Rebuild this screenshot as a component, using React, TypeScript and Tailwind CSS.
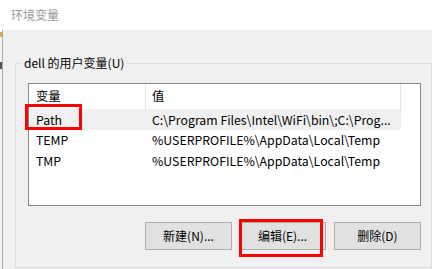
const font = { fontFamily: '"Noto Sans CJK SC", "Noto Sans", sans-serif' };

const rows = [
  { name: "Path", value: "C:\\Program Files\\Intel\\WiFi\\bin\\;C:\\Prog...", selected: true },
  { name: "TEMP", value: "%USERPROFILE%\\AppData\\Local\\Temp" },
  { name: "TMP", value: "%USERPROFILE%\\AppData\\Local\\Temp" },
];

function Btn({ label, className = "" }: { label: string; className?: string }) {
  return (
    <button className={`w-[87px] h-[28px] bg-[#e1e1e1] border border-[#adadad] text-[12px] text-black flex items-center justify-center ${className}`}>
      {label}
    </button>
  );
}

export default function App() {
  return (
    <div className="relative w-[432px] h-[269px] overflow-hidden flex bg-white text-black" style={font}>
      {/* edge of the window behind */}
      <div className="w-[2px] flex flex-col bg-[#f3f3f3]">
        <div className="h-[32px] bg-white" />
        <div className="h-[5px] bg-[#e8a33c]" />
        <div className="h-[25px]" />
        <div className="h-[7px] bg-[#555]" />
      </div>

      <div className="flex-1 flex flex-col">
        <div className="h-[30px] bg-white flex items-center pl-[9px] text-[12px] text-[#999]">
          环境变量
        </div>

        <div className="flex-1 bg-[#f0f0f0] border-l border-[#a9a9a9] pl-[12px] pt-[33px]">
          <div className="relative border border-[#dcdcdc] h-[205px] pl-[12px] pt-[19px] pr-[10px]">
            <span className="absolute -top-[10px] left-[6px] px-[2px] bg-[#f0f0f0] text-[12px] leading-[18px]">
              dell 的用户变量(U)
            </span>

            <div className="h-[123px] bg-white border border-[#828790] text-[12.3px]">
              <div className="flex h-[25px] items-center">
                <div className="w-[117px] h-full pl-[7px] flex items-center border-r border-[#e5e5e5]">变量</div>
                <div className="w-[255px] h-full pl-[6px] flex items-center border-r border-[#e5e5e5]">值</div>
              </div>
              {rows.map((r) => (
                <div key={r.name} className="flex h-[20.5px] items-center">
                  <div className={`flex h-full items-center w-[372px] pt-[1px] ${r.selected ? "bg-[#f0f0f0]" : ""}`}>
                    <div className="w-[117px] pl-[7px]">{r.name}</div>
                    <div className="w-[255px] pl-[6px] whitespace-nowrap overflow-hidden">{r.value}</div>
                  </div>
                </div>
              ))}
            </div>

            <div className="flex justify-end mt-[16px]">
              <Btn label="新建(N)..." />
              <Btn label="编辑(E)..." className="ml-[7px]" />
              <Btn label="删除(D)" className="ml-[8px]" />
            </div>
          </div>
        </div>
      </div>

      {/* red highlight boxes */}
      <div className="absolute left-[25px] top-[104px] w-[57px] h-[26px] border-[3px] border-[#f00]" />
      <div className="absolute left-[239px] top-[219px] w-[84px] h-[38px] border-[3px] border-[#f00]" />
    </div>
  );
}
